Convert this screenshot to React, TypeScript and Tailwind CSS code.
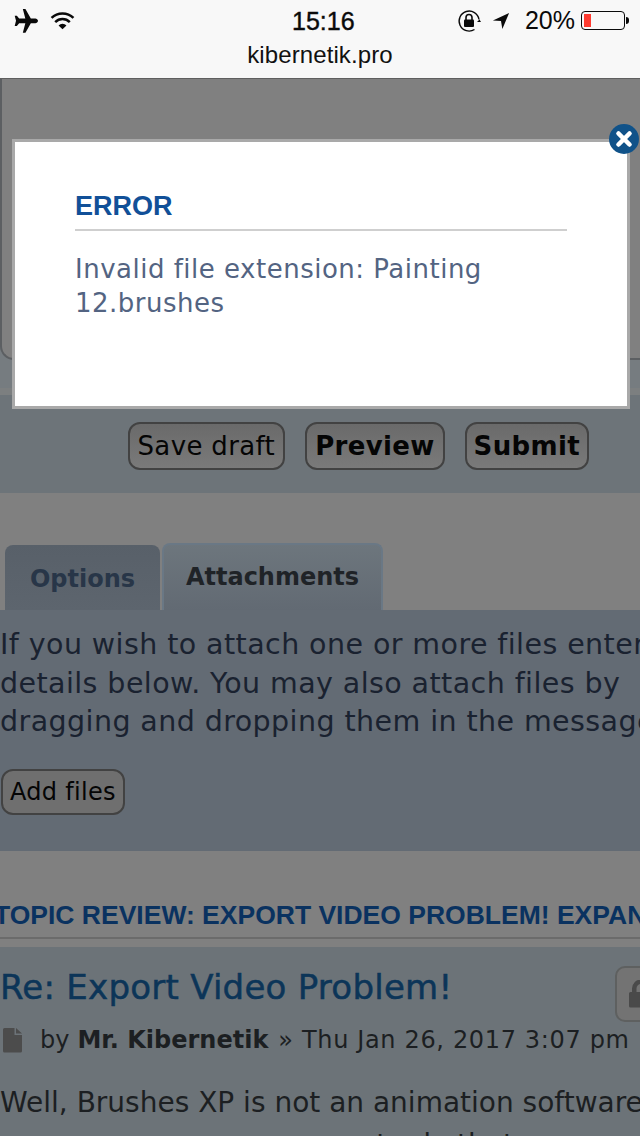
import { X } from "lucide-react";

const verdana = "font-['DejaVu_Sans',sans-serif]";

function StatusBar() {
  return (
    <div className="h-[79px] border-b border-[#5f5f5f] bg-[#f8f8f8] font-['Liberation_Sans',sans-serif] text-[#0a0a0a]">
      <div className="relative flex h-[41px] items-center justify-between pl-[12px] pr-[11px]">
        <div className="flex items-center gap-[12px]">
          <svg width="26" height="26" viewBox="0 0 24 24" fill="#0a0a0a">
            <path d="M10 1h2.400l5 8.600h4.200c1 0 2.400 1 2.400 2.200s-1.400 2.200-2.400 2.200h-4.200l-5 8.800H10l2.300-8.800H6.600L4.500 16.600H2.500l1.200-4.800L2.500 7.200h2L6.600 9.600h5.700z" />
          </svg>
          <svg width="25" height="19" viewBox="0 0 24 18" fill="none" stroke="#0a0a0a" strokeWidth="2.400">
            <path d="M1.500 6.500a15 15 0 0 1 21 0" />
            <path d="M5 10.500a10 10 0 0 1 14 0" />
            <path d="M12 17.500l-3.800-3.800a5.400 5.400 0 0 1 7.600 0z" fill="#0a0a0a" stroke="none" />
          </svg>
        </div>
        <span className="absolute left-[292px] top-[9px] text-[25px] font-medium leading-[25px] [-webkit-text-stroke:0.4px_#0a0a0a]">
          15:16
        </span>
        <div className="flex items-center">
          <svg width="24" height="24" viewBox="0 0 24 24" fill="none" stroke="#0a0a0a" strokeWidth="1.400">
            <path d="M22 10.500A10 10 0 1 0 17.500 20.500" />
            <path d="M20 13l2.500-2.500L24 13" fill="#0a0a0a" stroke="none" />
            <path d="M9 11V8.500a3 3 0 0 1 6 0V11" strokeWidth="1.600" />
            <rect x="7" y="10.500" width="10" height="7.500" rx="1" fill="#0a0a0a" stroke="none" />
          </svg>
          <svg width="18" height="20" viewBox="0 0 20 20" fill="#0a0a0a" className="ml-[11px]">
            <path d="M19 1L1 9.500l9 .5 1.500 9z" />
          </svg>
          <span className="ml-[15px] text-[25px] leading-none">20%</span>
          <div className="ml-[6px] h-[19px] w-[44px] rounded-[4px] border border-[#0a0a0a] p-[2px]">
            <div className="h-full w-[7px] bg-[#ff3b30]" />
          </div>
          <div className="ml-[1px] h-[7px] w-[3px] rounded-r-full bg-[#0a0a0a]" />
        </div>
      </div>
      <p className="text-center text-[24px] leading-[28px] tracking-[0.1px] text-[#111]">kibernetik.pro</p>
    </div>
  );
}

function PageButton({ label, bold, pad }: { label: string; bold?: boolean; pad: string }) {
  return (
    <button
      className={`h-[48px] rounded-[12px] border-2 border-[#424242] bg-gradient-to-b from-[#6a6a6a] to-[#7a7a7a] text-[26px] leading-none tracking-[0.35px] text-[#050505] ${pad} ${bold ? "font-bold" : ""}`}
    >
      {label}
    </button>
  );
}

function ErrorModal() {
  return (
    <div className="absolute left-[12px] top-[139px] h-[270px] w-[618px] border-[3px] border-[#a9a9a9] bg-white">
      <div className="pl-[60px] pr-[60px] pt-[47px]">
        <h2 className="border-b-2 border-[#cfcfcf] pb-[6px] font-['Liberation_Sans',sans-serif] text-[27px] font-bold leading-[34px] text-[#115098]">
          ERROR
        </h2>
        <p className="mt-[21px] text-[26px] leading-[34px] tracking-[0.5px] text-[#536482]">
          Invalid file extension: Painting 12.brushes
        </p>
      </div>
      <div className="absolute right-[-12px] top-[-18px] flex h-[30px] w-[30px] items-center justify-center rounded-full bg-[#105289]">
        <X size={22} color="#fff" strokeWidth={5} />
      </div>
    </div>
  );
}

export default function App() {
  return (
    <div className={`relative h-[1136px] w-[640px] overflow-hidden bg-[#808080] text-[27px] ${verdana}`}>
      <StatusBar />

      <div className="h-[309px] bg-[#767c80]">
        <div className="h-[281px] rounded-bl-[14px] border-b-2 border-l-2 border-[#5c5f62] bg-[#808080]" />
      </div>
      <div className="flex h-[105px] items-start justify-end gap-[20px] border-t-[7px] border-[#7c7f80] bg-[#6d7479] pr-[51px] pt-[27px]">
        <PageButton label="Save draft" pad="px-[8px]" />
        <PageButton label="Preview" bold pad="px-[8px]" />
        <PageButton label="Submit" bold pad="px-[7px]" />
      </div>

      <div className="flex h-[117px] items-end gap-[2px] pl-[5px]">
        <div className="flex h-[65px] w-[155px] items-center justify-center rounded-t-[8px] bg-gradient-to-b from-[#586069] to-[#5d656e] pt-[2px] text-[24px] font-bold text-[#283648]">
          Options
        </div>
        <div className="h-[67px] w-[221px] rounded-t-[8px] border-2 border-b-0 border-[#6a7885] bg-gradient-to-b from-[#6d767d] to-[#626a73] pt-[16px] text-center text-[24px] font-bold leading-[32px] text-[#1f2327]">
          Attachments
        </div>
      </div>

      <div className="h-[241px] bg-[#636b74] text-[#1a2230]">
        <div className="whitespace-nowrap pt-[16px] text-[28.5px] leading-[38.5px] tracking-[0.42px]">
          <p>If you wish to attach one or more files enter</p>
          <p>details below. You may also attach files by</p>
          <p>dragging and dropping them in the message</p>
        </div>
        <button className="ml-[1px] mt-[27px] h-[46px] rounded-[12px] border-2 border-[#424242] bg-[#6f6f6f] px-[7px] text-[24px] leading-none tracking-[0.3px] text-[#050505]">
          Add files
        </button>
      </div>

      <div className="h-[96px] overflow-hidden pt-[46px]">
        <h3 className="ml-[-6px] h-[42px] whitespace-nowrap border-b-2 border-[#6b6b6b] font-['Liberation_Sans',sans-serif] text-[26.5px] font-bold leading-[36px] text-[#0a3260]">
          TOPIC REVIEW: EXPORT VIDEO PROBLEM! EXPAND VIEW
        </h3>
      </div>

      <div className="relative h-[189px] overflow-hidden bg-[#6c7378] text-[#1c1f22]">
        <h3 className="pt-[18px] text-[34px] leading-[44px] tracking-[0.25px] text-[#0c3558] [-webkit-text-stroke:0.5px_#0c3558]">
          Re: Export Video Problem!
        </h3>
        <div className="mt-[15px] flex items-center whitespace-nowrap text-[24px] leading-[32px]">
          <svg width="20" height="26" viewBox="0 0 20 26" fill="#4c4c4c" className="ml-[3px] mr-[17px]">
            <path d="M1.500 1h10v7h7.500v16a1.500 1.500 0 0 1-1.500 1.500h-16A1.500 1.500 0 0 1 0 24V2.500A1.500 1.500 0 0 1 1.500 1zM13 1l6 5.500h-6z" />
          </svg>
          <span>by</span>
          <span className="ml-[8px] font-bold">Mr. Kibernetik</span>
          <span className="ml-[10px] tracking-[0.65px]">» Thu Jan 26, 2017 3:07 pm</span>
        </div>
        <div className="mt-[26px] whitespace-nowrap text-[28px] leading-[42px]">
          <p>Well, Brushes XP is not an animation software</p>
          <p>so you can use more apps to do that</p>
        </div>
        <div className="absolute left-[615px] top-[19px] flex h-[56px] w-[40px] items-center rounded-[10px] border-2 border-[#5e6060] bg-[#737373] pl-[12px]">
          <svg width="24" height="28" viewBox="0 0 24 28" fill="#4a4a4a">
            <path d="M3 12V8.500a9 9 0 0 1 18 0V12h1.500A1.500 1.500 0 0 1 24 13.500V26a1.500 1.500 0 0 1-1.500 1.500h-21A1.500 1.500 0 0 1 0 26V13.500A1.500 1.500 0 0 1 1.500 12zm4.500 0h9V8.500a4.500 4.500 0 0 0-9 0z" />
          </svg>
        </div>
      </div>

      <ErrorModal />
    </div>
  );
}
